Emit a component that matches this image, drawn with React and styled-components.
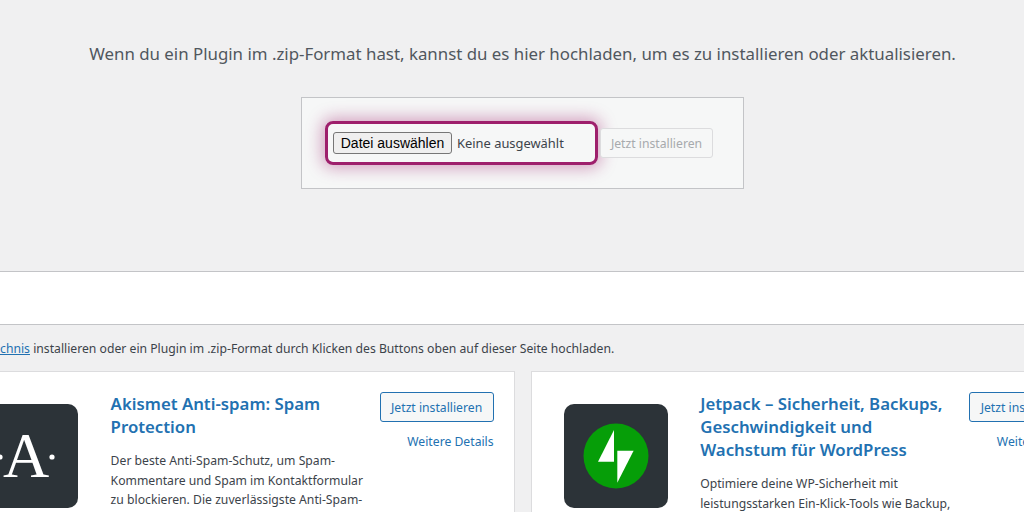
import React from "react";
import styled, { createGlobalStyle } from "styled-components";

const GlobalStyle = createGlobalStyle`
  html, body {
    margin: 0;
    padding: 0;
    background: #f0f0f1;
    overflow: hidden;
  }
  body {
    font-family: "Noto Sans", "Open Sans", sans-serif;
    font-size: 13px;
    color: #3c434a;
  }
`;

const Page = styled.div`
  width: 1024px;
  height: 512px;
  overflow: hidden;
`;

const UploadSection = styled.section`
  height: 271px;
  box-sizing: border-box;
  padding: 42px 0 0 21px;
  display: flex;
  flex-direction: column;
  align-items: center;
`;

const InstallHelp = styled.p`
  margin: 0 0 31px;
  font-size: 16.85px;
  line-height: 24px;
  color: #50575e;
  white-space: nowrap;
`;

const UploadForm = styled.form`
  box-sizing: border-box;
  width: 443px;
  height: 92px;
  margin: 0;
  padding: 0 30px 0 23px;
  display: flex;
  align-items: center;
  gap: 2px;
  background: #f6f7f7;
  border: 1px solid #c3c4c7;
`;

const FileField = styled.div`
  box-sizing: border-box;
  width: 273px;
  height: 44px;
  padding: 0 5px;
  display: flex;
  align-items: center;
  gap: 5px;
  border: 3px solid #9e1f6c;
  border-radius: 8px;
  box-shadow: 0 0 16px 3px rgba(158, 31, 108, 0.4);
`;

const FileButton = styled.button`
  box-sizing: border-box;
  width: 119px;
  height: 22px;
  padding: 0;
  font-family: "Liberation Sans", Arial, sans-serif;
  font-size: 14px;
  color: #000;
  background: #efefef;
  border: 1px solid #767676;
  border-radius: 3px;
`;

const FileName = styled.span`
  font-size: 12.9px;
  color: #3c434a;
  white-space: nowrap;
`;

const ActionButton = styled.button`
  box-sizing: border-box;
  flex: none;
  height: 30px;
  width: ${(p) => (p.$disabled ? "113px" : "114px")};
  padding: 0;
  font-family: inherit;
  font-size: 12.2px;
  white-space: nowrap;
  color: ${(p) => (p.$disabled ? "#a7aaad" : "#2271b1")};
  background: #f6f7f7;
  border: 1px solid ${(p) => (p.$disabled ? "#dcdcde" : "#2271b1")};
  border-radius: 3px;
`;

const FilterBar = styled.div`
  height: 52px;
  background: #fff;
  border-top: 1px solid #c3c4c7;
  border-bottom: 1px solid #c3c4c7;
`;

const Notice = styled.p`
  margin: 15px 0 14px -755px;
  font-size: 12.2px;
  line-height: 17px;
  white-space: nowrap;
  color: #3c434a;

  a {
    color: #2271b1;
  }
`;

const CardGrid = styled.div`
  display: flex;
  gap: 16px;
  margin-left: -58.9px;
`;

const Card = styled.article`
  box-sizing: border-box;
  flex: none;
  width: 573.6px;
  height: 300px;
  padding: 20px 20px 0 32px;
  display: flex;
  background: #fff;
  border: 1px solid #dcdcde;
`;

const IconBox = styled.div`
  flex: none;
  width: 104px;
  height: 104px;
  margin-top: 12px;
  border-radius: 10px;
  overflow: hidden;
  background: #2c3338;

  svg {
    display: block;
  }
`;

const CardBody = styled.div`
  flex: none;
  width: 256px;
  margin-left: 32.5px;
`;

const CardTitle = styled.h3`
  margin: 0 0 13px;
  font-size: 16.8px;
  font-weight: 600;
  line-height: 23px;
  color: #2271b1;
`;

const CardText = styled.p`
  margin: 0;
  font-size: 12.2px;
  line-height: 19.5px;
  color: #3c434a;
`;

const CardActions = styled.div`
  flex: none;
  width: 114px;
  margin-left: 13px;
  display: flex;
  flex-direction: column;
  align-items: flex-end;
  gap: 11px;
`;

const DetailsLink = styled.a`
  font-size: 12.2px;
  line-height: 18px;
  color: #2271b1;
  text-decoration: none;
  white-space: nowrap;
`;

const AkismetIcon = () => (
  <svg width="104" height="104" viewBox="0 0 104 104">
    <text x="52" y="73" textAnchor="middle" fontFamily="Liberation Serif, serif" fontSize="64" fill="#fff">
      A
    </text>
    <circle cx="26" cy="53" r="2.6" fill="#fff" />
    <circle cx="78" cy="53" r="2.6" fill="#fff" />
  </svg>
);

const JetpackIcon = () => (
  <svg width="104" height="104" viewBox="0 0 104 104">
    <circle cx="52" cy="52" r="32.5" fill="#069e08" />
    <polygon points="50,26 50,57.7 34,57.7" fill="#fff" />
    <polygon points="53.3,46.7 69.6,46.7 53.3,78.7" fill="#fff" />
  </svg>
);

const plugins = [
  {
    name: "Akismet Anti-spam: Spam Protection",
    icon: <AkismetIcon />,
    text: "Der beste Anti-Spam-Schutz, um Spam-Kommentare und Spam im Kontaktformular zu blockieren. Die zuverlässigste Anti-Spam-Lösung für WordPress und WooCommerce.",
  },
  {
    name: "Jetpack – Sicherheit, Backups, Geschwindigkeit und Wachstum für WordPress",
    icon: <JetpackIcon />,
    text: "Optimiere deine WP-Sicherheit mit leistungsstarken Ein-Klick-Tools wie Backup, WAF und Malware-Scan.",
  },
];

export default function App() {
  return (
    <Page>
      <GlobalStyle />
      <UploadSection>
        <InstallHelp>
          Wenn du ein Plugin im .zip-Format hast, kannst du es hier hochladen, um es zu installieren oder aktualisieren.
        </InstallHelp>
        <UploadForm>
          <FileField>
            <FileButton type="button">Datei auswählen</FileButton>
            <FileName>Keine ausgewählt</FileName>
          </FileField>
          <ActionButton type="button" $disabled>
            Jetzt installieren
          </ActionButton>
        </UploadForm>
      </UploadSection>
      <FilterBar />
      <Notice>
        Plugins erweitern und ergänzen die Funktionalität von WordPress. Du kannst Plugins automatisch aus dem{" "}
        <a href="#verzeichnis">WordPress-Plugin-Verzeichnis</a> installieren oder ein Plugin im .zip-Format durch Klicken
        des Buttons oben auf dieser Seite hochladen.
      </Notice>
      <CardGrid>
        {plugins.map((plugin) => (
          <Card key={plugin.name}>
            <IconBox>{plugin.icon}</IconBox>
            <CardBody>
              <CardTitle>{plugin.name}</CardTitle>
              <CardText>{plugin.text}</CardText>
            </CardBody>
            <CardActions>
              <ActionButton type="button">Jetzt installieren</ActionButton>
              <DetailsLink href="#details">Weitere Details</DetailsLink>
            </CardActions>
          </Card>
        ))}
      </CardGrid>
    </Page>
  );
}
